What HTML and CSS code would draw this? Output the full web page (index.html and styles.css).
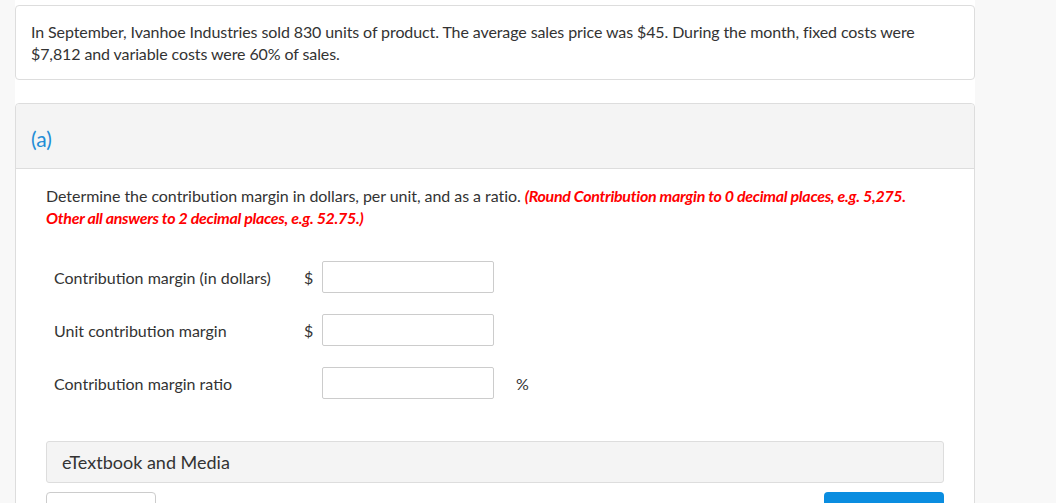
FILE: index.html
```html
<!DOCTYPE html>
<html>
<head>
<meta charset="utf-8">
<link rel="stylesheet" href="styles.css">
</head>
<body>
<div class="page">
  <div class="card intro">
    <p>In September, Ivanhoe Industries sold 830 units of product. The average sales price was $45. During the month, fixed costs were $7,812 and variable costs were 60% of sales.</p>
  </div>
  <div class="card part">
    <div class="part-head">(a)</div>
    <div class="part-body">
      <p class="question">Determine the contribution margin in dollars, per unit, and as a ratio. <span class="hint">(Round Contribution margin to 0 decimal places, e.g. 5,275. Other all answers to 2 decimal places, e.g. 52.75.)</span></p>
      <div class="form">
        <div class="row">
          <span class="label">Contribution margin (in dollars)</span>
          <span class="pre">$</span>
          <span class="input"></span>
        </div>
        <div class="row">
          <span class="label">Unit contribution margin</span>
          <span class="pre">$</span>
          <span class="input"></span>
        </div>
        <div class="row">
          <span class="label">Contribution margin ratio</span>
          <span class="pre"></span>
          <span class="input"></span>
          <span class="post">%</span>
        </div>
      </div>
      <div class="media">eTextbook and Media</div>
      <div class="actions">
        <span class="btn-light"></span>
        <span class="btn-blue"></span>
      </div>
    </div>
  </div>
</div>
</body>
</html>
```

FILE: styles.css
```css
html, body {
  margin: 0;
  padding: 0;
  background: #f8f8f8;
  font-family: "Lato", "Open Sans", sans-serif;
  color: #333;
  overflow: hidden;
}
.page {
  margin-left: 15px;
  width: 960px;
  background: #fff;
  padding-top: 5px;
  height: 600px;
}
.card {
  border: 1px solid #ddd;
  border-radius: 4px;
  background: #fff;
  box-sizing: border-box;
  width: 960px;
}
.intro {
  padding: 15px 15px 14px 15px;
}
.intro p {
  margin: 0;
  font-size: 16px;
  letter-spacing: -0.1px;
  line-height: 22px;
  width: 910px;
}
.part {
  margin-top: 23px;
}
.part-head {
  height: 65px;
  background: #f4f4f4;
  border-bottom: 1px solid #ddd;
  border-radius: 4px 4px 0 0;
  display: flex;
  align-items: center;
  padding-left: 15px;
  font-size: 21px;
  color: #1f8dd6;
  padding-top: 4px;
  box-sizing: border-box;
}
.part-body {
  padding: 16px 30px 0 30px;
}
.question {
  margin: 0;
  font-size: 16px;
  letter-spacing: -0.05px;
  line-height: 22px;
  width: 880px;
}
.hint {
  color: #ff0000;
  font-style: italic;
  font-weight: bold;
  letter-spacing: -0.3px;
}
.form {
  margin-top: 32px;
  padding-left: 8px;
  display: flex;
  flex-direction: column;
  gap: 21px;
}
.row {
  display: flex;
  align-items: center;
  height: 32px;
}
.label {
  width: 250px;
  font-size: 16px;
}
.pre {
  width: 18px;
  font-size: 16px;
}
.input {
  width: 172px;
  height: 32px;
  box-sizing: border-box;
  border: 1px solid #ccc;
  border-radius: 2px;
  background: #fff;
}
.post {
  margin-left: 22px;
  font-size: 16px;
}
.media {
  margin-top: 42px;
  height: 42px;
  box-sizing: border-box;
  background: #f4f4f4;
  border: 1px solid #ddd;
  border-radius: 3px;
  display: flex;
  align-items: center;
  padding-left: 15px;
  font-size: 18px;
}
.actions {
  margin-top: 9px;
  display: flex;
  justify-content: space-between;
}
.btn-light {
  width: 110px;
  height: 36px;
  box-sizing: border-box;
  border: 1px solid #ccc;
  border-radius: 4px;
  background: #fff;
}
.btn-blue {
  width: 120px;
  height: 36px;
  border-radius: 4px;
  background: #0a8de0;
}
```
